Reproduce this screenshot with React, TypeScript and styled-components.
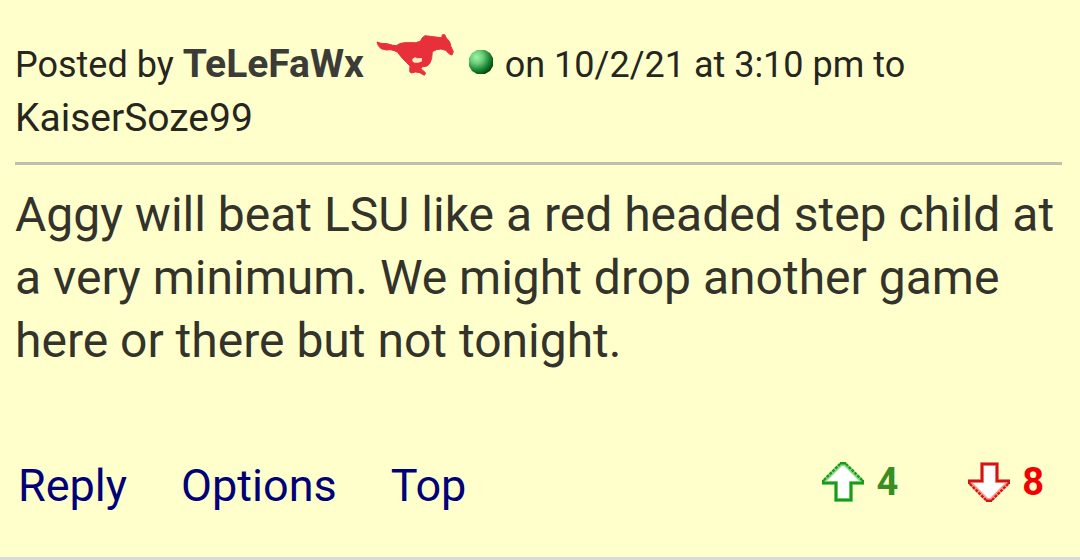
import React from 'react';
import styled, { createGlobalStyle } from 'styled-components';

const GlobalStyle = createGlobalStyle`
  *, *::before, *::after { box-sizing: border-box; }
  body {
    margin: 0;
    background: #ffffcc;
    font-family: Roboto, "Liberation Sans", sans-serif;
    color: #33332b;
  }
`;

const Post = styled.article`
  padding: 38px 16px 45px 15px;
  border-bottom: 3px solid #dadada;
`;

const Meta = styled.header`
  padding-bottom: 16px;
  margin-right: 2px;
  border-bottom: 3px solid #bfbfad;
  font-size: 36px;
  line-height: 54px;
  color: #26261f;
`;

const Author = styled.b`
  font-size: 39px;
  line-height: 1;
  color: #3b3b38;
`;

const Recipient = styled.span`
  font-size: 39px;
  line-height: 1;
`;

const TeamLogo = styled.svg`
  width: 79px;
  height: 42px;
  margin: -12px 2px 0 3px;
  vertical-align: 1px;
`;

const StatusDot = styled.svg`
  width: 26px;
  height: 26px;
  margin: 0 2px;
  vertical-align: 2px;
`;

const Message = styled.p`
  margin: 18px 0 87px;
  font-size: 48px;
  line-height: 63px;
`;

const Footer = styled.footer`
  display: flex;
  align-items: center;
  justify-content: space-between;
  padding: 0 20px 0 3px;
`;

const Links = styled.nav`
  display: flex;
  gap: 54px;
`;

const ActionLink = styled.a`
  font-size: 45px;
  line-height: 53px;
  color: #000078;
  text-decoration: none;
`;

const Votes = styled.div`
  display: flex;
  gap: 70px;
`;

const VoteButton = styled.button<{ $color: string }>`
  display: flex;
  align-items: center;
  gap: 12px;
  padding: 0 0 8px;
  border: 0;
  background: none;
  font: bold 38px/44px Roboto, "Liberation Sans", sans-serif;
  color: ${(p) => p.$color};
  cursor: pointer;
`;

const Arrow = styled.svg`
  width: 42px;
  height: 40px;
`;

function Mustang() {
  return (
    <TeamLogo viewBox="5 7 237 126" role="img" aria-label="Mustangs">
      <path
        fill="#e8303a"
        stroke="#e8303a"
        strokeWidth="3"
        strokeLinejoin="round"
        d="M8 31 L20 35 L38 36 L56 41 L66 42 L76 36 L90 33 L124 33 L138 29 L144 18 L152 12 L168 14 L184 16 L202 18 L204 9 L211 9 L216 19 L226 30 L230 45 L237 60 L233 70 L226 68 L214 56 L200 52 L186 54 L174 60 L172 80 L166 96 L158 103 L142 106 L140 111 L154 124 L150 131 L136 123 L124 121 L110 124 L106 119 L107 103 L96 92 L86 82 L76 70 L70 62 L60 57 L48 54 L36 55 L20 51 L12 42 Z"
      />
      <path fill="#ffe9c0" d="M114 82 L122 77 L130 80 L143 79 L143 89 L132 93 L120 93 L114 89 Z" />
    </TeamLogo>
  );
}

function OnlineDot() {
  return (
    <StatusDot viewBox="0 0 26 26" role="img" aria-label="Online">
      <defs>
        <radialGradient id="sphere" cx="0.32" cy="0.3" r="0.75">
          <stop offset="0" stopColor="#9df5a4" />
          <stop offset="0.35" stopColor="#6ccf7c" />
          <stop offset="0.7" stopColor="#21893a" />
          <stop offset="1" stopColor="#004d0b" />
        </radialGradient>
      </defs>
      <path fill="url(#sphere)" d="M9 1H17L22 4L25 9V17L22 22L17 25H9L4 22L1 17V9L4 4Z" />
    </StatusDot>
  );
}

function VoteArrow({ down, color, halo }: { down?: boolean; color: string; halo: string }) {
  return (
    <Arrow viewBox="0 0 42 40" aria-hidden="true">
      <g transform={down ? 'matrix(1 0 0 -1 0 40)' : undefined}>
        <path fill="#fff" stroke={halo} strokeWidth="4" d="M19 2 H23 L40 19 V21 H29 V38 H14 V21 H2 V19 Z" />
        <path fill="none" stroke={color} strokeWidth="2.6" d="M1.3 18 V21 H14 V38 H29 V21 H40.7 V18 M18 1.3 H24" />
        <path fill="none" stroke={color} strokeWidth="2.4" strokeDasharray="2.8 1.2" d="M2 18 L18 2 M24 2 L40 18" />
      </g>
    </Arrow>
  );
}

export default function App() {
  return (
    <>
      <GlobalStyle />
      <Post>
        <Meta>
          <span>Posted by</span> <Author>TeLeFaWx</Author> <Mustang /> <OnlineDot />{' '}
          <span>on 10/2/21 at 3:10 pm to</span> <Recipient>KaiserSoze99</Recipient>
        </Meta>
        <Message>
          Aggy will beat LSU like a red headed step child at a very minimum. We might drop another game here or
          there but not tonight.
        </Message>
        <Footer>
          <Links aria-label="Post actions">
            <ActionLink href="#reply">Reply</ActionLink>
            <ActionLink href="#options">Options</ActionLink>
            <ActionLink href="#top">Top</ActionLink>
          </Links>
          <Votes>
            <VoteButton type="button" $color="#388e22" aria-label="Upvote, 4">
              <VoteArrow color="#159b18" halo="#91d889" />
              4
            </VoteButton>
            <VoteButton type="button" $color="#f50000" aria-label="Downvote, 8">
              <VoteArrow down color="#d31414" halo="#f5a08c" />
              8
            </VoteButton>
          </Votes>
        </Footer>
      </Post>
    </>
  );
}
